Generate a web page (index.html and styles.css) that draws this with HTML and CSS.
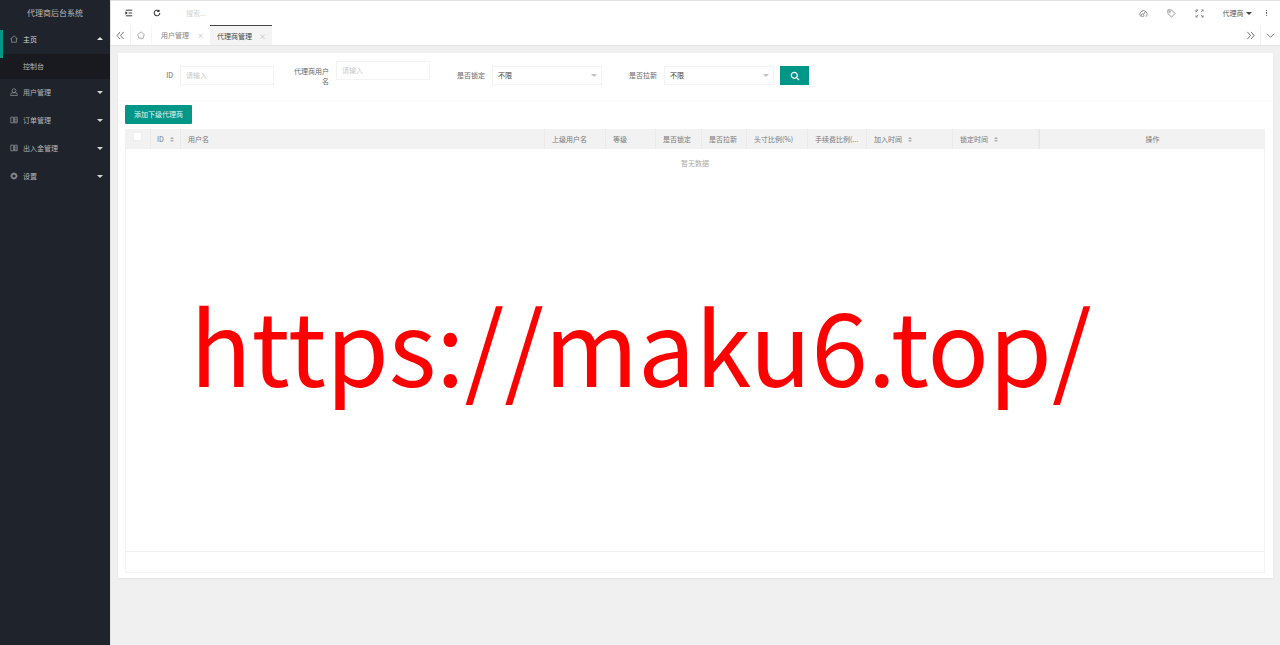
FILE: index.html
```html
<!DOCTYPE html>
<html>
<head>
<meta charset="UTF-8">
<title>代理商后台系统</title>
<link rel="stylesheet" href="styles.css">
</head>
<body>
<div class="layout">
	<div class="side">
		<div class="logo">代理商后台系统</div>
		<div class="menu-item active">
			<svg class="mi" viewBox="0 0 10 10"><path d="M.5 5 5 1l4.500 4M2 4v5h6V4"/></svg>
			<span>主页</span><i class="arrow up"></i>
		</div>
		<div class="sub-item">控制台</div>
		<div class="menu-item">
			<svg class="mi" viewBox="0 0 10 10"><circle cx="5" cy="3.400" r="2.400"/><path d="M1 9.500V8q0-2 2-2h4q2 0 2 2v1.500z"/></svg>
			<span>用户管理</span><i class="arrow"></i>
		</div>
		<div class="menu-item">
			<svg class="mi" viewBox="0 0 10 10"><path d="M1 1.500h3.500v7H1zM5.500 1.500H9v7H5.500zM6 4h2.500M6 6.500h2.500"/></svg>
			<span>订单管理</span><i class="arrow"></i>
		</div>
		<div class="menu-item">
			<svg class="mi" viewBox="0 0 10 10"><path d="M1 1.500h3.500v7H1zM5.500 1.500H9v7H5.500zM6 4h2.500M6 6.500h2.500"/></svg>
			<span>出入金管理</span><i class="arrow"></i>
		</div>
		<div class="menu-item">
			<svg class="mi gear" viewBox="0 0 10 10"><circle cx="5" cy="5" r="2.800"/><path d="M5 .5v1.500M5 8v1.500M.5 5H2M8 5h1.500M2 2l1 1M7 7l1 1M8 2 7 3M3 7 2 8"/></svg>
			<span>设置</span><i class="arrow"></i>
		</div>
	</div>
	<div class="main">
		<div class="top">
			<svg class="ti menu-toggle" viewBox="0 0 10 10"><path d="M1 1.500h8M4.500 5H9M1 8.500h8M1 3.500 2.800 5 1 6.500z"/></svg>
			<svg class="ti refresh" viewBox="0 0 10 10"><path d="M8.500 5A3.500 3.500 0 1 1 7 2.100M7.500.8V3H5.300"/></svg>
			<div class="search">搜索...</div>
			<svg class="ri" viewBox="0 0 10 10"><path d="M2 8.500a4 4 0 1 1 6 0"/><circle cx="4" cy="7" r="1.500"/><path d="M5 6l2-3"/></svg>
			<svg class="ri r2" viewBox="0 0 10 10"><path d="M1 1h4l4 4-4 4-4-4z"/><circle cx="3.200" cy="3.200" r=".6"/></svg>
			<svg class="ri r3" viewBox="0 0 10 10"><path d="M1 3.500 3.500 1M1 1h2M1 1v2M9 1H7M9 1v2M9 1 6.500 3.500M1 9h2M1 9V7M1 9l2.500-2.500M9 9H7M9 9V7M9 9 6.500 6.500"/></svg>
			<div class="user">代理商<i class="arrow dark"></i></div>
			<div class="dots"><b></b><b></b><b></b></div>
		</div>
		<div class="tabs">
			<div class="tab-btn">
				<svg class="ti" viewBox="0 0 10 10"><path d="M4.500 1 1 5l3.500 4M8.500 1 5 5l3.500 4"/></svg>
			</div>
			<div class="tab-home">
				<svg class="ti" viewBox="0 0 10 10"><path d="M5 1 9 4.200 7.800 9H2.200L1 4.200z"/></svg>
			</div>
			<div class="tab">用户管理<span class="close">×</span></div>
			<div class="tab on">代理商管理<span class="close">×</span></div>
			<div class="tabs-fill"></div>
			<div class="tab-btn">
				<svg class="ti" viewBox="0 0 10 10"><path d="M1.500 1 5 5 1.500 9M5.500 1 9 5 5.500 9"/></svg>
			</div>
			<div class="tab-btn last">
				<svg class="ti" viewBox="0 0 10 10"><path d="M1 3 5 7 9 3"/></svg>
			</div>
		</div>
		<div class="content">
			<div class="card">
				<div class="form">
					<label class="lb lb1">ID</label>
					<div class="input">请输入</div>
					<label class="lb lb2">代理商用户名</label>
					<div class="input raised">请输入</div>
					<label class="lb lb3">是否锁定</label>
					<div class="select">不限<i class="arrow gray"></i></div>
					<label class="lb lb4">是否拉新</label>
					<div class="select">不限<i class="arrow gray"></i></div>
					<div class="btn-search">
						<svg viewBox="0 0 10 10"><circle cx="4.300" cy="4.300" r="3"/><path d="M6.500 6.500 9 9"/></svg>
					</div>
				</div>
				<div class="toolbar"><div class="btn-add">添加下级代理商</div></div>
				<div class="table">
					<div class="thead">
						<div class="th"><span class="check"></span></div>
						<div class="th id">ID<i class="sort"></i></div>
						<div class="th">用户名</div>
						<div class="th">上级用户名</div>
						<div class="th">等级</div>
						<div class="th">是否锁定</div>
						<div class="th">是否拉新</div>
						<div class="th">头寸比例(%)</div>
						<div class="th">手续费比例(...</div>
						<div class="th">加入时间<i class="sort"></i></div>
						<div class="th">锁定时间<i class="sort"></i></div>
						<div class="th center">操作</div>
					</div>
					<div class="tbody"><div class="empty">暂无数据</div></div>
					<div class="tfoot"></div>
				</div>
			</div>
		</div>
	</div>
</div>
<div class="watermark">https://maku6.top/</div>
</body>
</html>
```

FILE: styles.css
```css
* {
	box-sizing: border-box;
}
body {
	margin: 0;
	background: #f0f0f0;
	color: #555;
	font-family: "Noto Sans CJK SC", "Liberation Sans", sans-serif;
	font-size: 7px;
	overflow: hidden;
}
svg {
	fill: none;
	stroke: currentColor;
	stroke-width: 1;
}
.layout {
	display: flex;
	height: 645px;
}
.side {
	width: 110px;
	flex: none;
	background: #1f232b;
	color: #b5b7ba;
	position: relative;
}
.logo {
	height: 25px;
	line-height: 25px;
	text-align: center;
	font-size: 8px;
	color: #b8babd;
}
.menu-item {
	display: flex;
	align-items: center;
	height: 28px;
	padding: 0 7px 2px 10px;
}
.menu-item span {
	margin-left: 5px;
	flex: 1;
}
.menu-item.active {
	height: 29px;
	color: #d5d6d8;
}
.menu-item.active::before {
	content: "";
	position: absolute;
	left: 0;
	top: 30px;
	width: 3px;
	height: 28px;
	background: #009688;
}
.mi {
	width: 8px;
	height: 8px;
	flex: none;
	color: #8f9195;
}
.gear {
	stroke-width: 1.6;
}
.sub-item {
	height: 25px;
	line-height: 25px;
	padding-left: 23px;
	background: #181a20;
	color: #b5b7ba;
}
.arrow {
	width: 0;
	height: 0;
	border-left: 3px solid transparent;
	border-right: 3px solid transparent;
	border-top: 3px solid #d5d6d8;
}
.arrow.up {
	border-top: 0;
	border-bottom: 3px solid #e4e5e6;
}
.arrow.dark {
	display: inline-block;
	margin-left: 2px;
	border-top-color: #444;
	vertical-align: 1px;
}
.arrow.gray {
	border-top-color: #c2c2c2;
}
.main {
	flex: 1;
	min-width: 0;
	border-left: 1px solid #e4e4e4;
	display: flex;
	flex-direction: column;
}
.top {
	height: 25px;
	flex: none;
	display: flex;
	align-items: center;
	padding-left: 14px;
	background: #fff;
	border-top: 1px solid #e2e2e2;
	color: #333;
}
.ti {
	width: 8px;
	height: 8px;
	flex: none;
}
.menu-toggle {
	stroke-width: 1.200;
}
.refresh {
	margin-left: 20px;
	stroke-width: 1.300;
}
.search {
	margin-left: 25px;
	flex: 1;
	color: #d2d2d2;
}
.ri {
	width: 9px;
	height: 9px;
	flex: none;
	color: #888;
}
.r2 {
	margin-left: 19px;
}
.r3 {
	margin-left: 19px;
}
.user {
	margin-left: 19px;
	color: #555;
}
.dots {
	margin: 0 13px 0 14px;
	display: flex;
	flex-direction: column;
	gap: 1px;
}
.dots b {
	width: 1.500px;
	height: 1.500px;
	background: #666;
}
.tabs {
	height: 21px;
	flex: none;
	display: flex;
	align-items: stretch;
	background: #fff;
	border-bottom: 1px solid #e4e4e4;
	color: #666;
}
.tab-btn {
	width: 19px;
	flex: none;
	display: flex;
	align-items: center;
	justify-content: center;
	color: #666;
}
.tab-btn .ti {
	width: 9px;
	height: 9px;
}
.tab-home {
	width: 21px;
	display: flex;
	align-items: center;
	justify-content: center;
	border-left: 1px solid #f2f2f2;
	color: #999;
}
.tab {
	width: 59px;
	display: flex;
	align-items: center;
	padding-left: 9px;
	color: #888;
	border-left: 1px solid #f6f6f6;
}
.tab.on {
	width: 62px;
	padding-left: 7px;
	background: #f4f4f4;
	color: #444;
	border-top: 1px solid #444;
	border-left: 0;
}
.close {
	margin-left: auto;
	margin-right: 6px;
	color: #bbb;
}
.tabs-fill {
	flex: 1;
}
.tab-btn.last {
	width: 20px;
	border-left: 1px solid #f2f2f2;
}
.content {
	flex: 1;
	padding: 7px 7px 0 7px;
}
.card {
	height: 525px;
	background: #fff;
	padding: 0 8px 5px 7px;
	box-shadow: 0 1px 2px rgba(0, 0, 0, 0.05);
	display: flex;
	flex-direction: column;
}
.form {
	height: 48px;
	flex: none;
	display: flex;
	align-items: flex-start;
	padding-top: 13px;
	margin: 0 -8px 0 -7px;
	border-bottom: 1px solid #f8f8f8;
}
.lb {
	color: #666;
	text-align: right;
	line-height: 18px;
	flex: none;
}
.lb1 {
	width: 55px;
	margin-right: 7px;
}
.lb2 {
	width: 36px;
	margin-left: 19px;
	margin-right: 7px;
	line-height: 10px;
}
.lb3 {
	width: 29px;
	margin-left: 26px;
	margin-right: 7px;
}
.lb4 {
	width: 29px;
	margin-left: 26px;
	margin-right: 7px;
}
.input {
	width: 94px;
	height: 19px;
	line-height: 17px;
	padding-left: 5px;
	border: 1px solid #f3f3f3;
	color: #c8c8c8;
	flex: none;
}
.raised {
	margin-top: -5px;
}
.select {
	width: 110px;
	height: 19px;
	flex: none;
	display: flex;
	align-items: center;
	justify-content: space-between;
	padding: 0 4px 1px 5px;
	border: 1px solid #f3f3f3;
	color: #444;
}
.btn-search {
	width: 29px;
	height: 19px;
	margin-left: 6px;
	background: #009688;
	color: #fff;
	display: flex;
	align-items: center;
	justify-content: center;
	flex: none;
}
.btn-search svg {
	width: 10px;
	height: 10px;
	stroke-width: 1.200;
}
.toolbar {
	padding-top: 4px;
	flex: none;
}
.btn-add {
	width: 67px;
	height: 19px;
	line-height: 19px;
	text-align: center;
	background: #009688;
	color: #e8f5f3;
	border-radius: 1px;
}
.table {
	margin-top: 5px;
	flex: 1;
	display: flex;
	flex-direction: column;
	border: 1px solid #f3f3f3;
	border-top: 0;
}
.thead {
	height: 20px;
	flex: none;
	display: grid;
	grid-template-columns: 26px 30px 364px 61px 50px 46px 45px 61px 59px 86px 86px 1fr;
	background: #f2f2f2;
	margin: 0 -1px;
	color: #777;
}
.th {
	display: flex;
	align-items: center;
	padding-left: 7px;
	border-right: 1px solid #eaeaea;
	white-space: nowrap;
}
.th.id {
	padding-left: 6px;
}
.th:last-child {
	border-right: 0;
	border-left: 1px solid #e6e6e6;
}
.center {
	justify-content: center;
	padding-left: 0;
}
.check {
	width: 9px;
	height: 9px;
	margin: -5px 0 0 1px;
	background: #fff;
	border: 1px solid #eee;
}
.sort {
	display: flex;
	flex-direction: column;
	gap: 1px;
	margin-left: 6px;
}
.sort::before,
.sort::after {
	content: "";
	width: 0;
	height: 0;
	border-left: 2.500px solid transparent;
	border-right: 2.500px solid transparent;
}
.sort::before {
	border-bottom: 2.500px solid #aaa;
}
.sort::after {
	border-top: 2.500px solid #aaa;
}
.tbody {
	flex: 1;
	border-bottom: 1px solid #f1f1f1;
}
.empty {
	text-align: center;
	color: #aaa;
	padding-top: 8px;
	line-height: 12px;
}
.tfoot {
	height: 20px;
	flex: none;
}
.watermark {
	position: absolute;
	left: 190px;
	top: 268px;
	color: #f00;
	font-size: 101.500px;
	line-height: 150px;
	white-space: nowrap;
}
```
